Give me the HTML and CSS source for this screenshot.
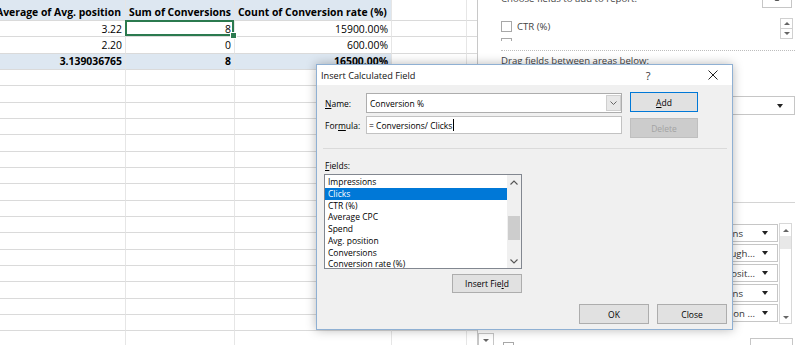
FILE: index.html
```html
<!DOCTYPE html>
<html>
<head>
<meta charset="utf-8">
<link rel="stylesheet" href="styles.css">
</head>
<body>
<div class="app">
  <div class="sheet">
    <div class="row head">
      <div class="c c1 num">Average of Avg. position</div>
      <div class="c c2">Sum of Conversions</div>
      <div class="c c3">Count of Conversion rate (%)</div>
      <div class="c c4"></div>
      <div class="c c5"></div>
    </div>
    <div class="row">
      <div class="c c1 num">3.22</div>
      <div class="c c2 num sel">8</div>
      <div class="c c3 num">15900.00%</div>
      <div class="c c4"></div>
      <div class="c c5"></div>
    </div>
    <div class="row">
      <div class="c c1 num">2.20</div>
      <div class="c c2 num">0</div>
      <div class="c c3 num">600.00%</div>
      <div class="c c4"></div>
      <div class="c c5"></div>
    </div>
    <div class="row total">
      <div class="c c1 num">3.139036765</div>
      <div class="c c2 num">8</div>
      <div class="c c3 num">16500.00%</div>
      <div class="c c4"></div>
      <div class="c c5"></div>
    </div>
    <div class="row"><div class="c c1"></div><div class="c c2"></div><div class="c c3"></div><div class="c c4"></div><div class="c c5"></div></div>
    <div class="row"><div class="c c1"></div><div class="c c2"></div><div class="c c3"></div><div class="c c4"></div><div class="c c5"></div></div>
    <div class="row"><div class="c c1"></div><div class="c c2"></div><div class="c c3"></div><div class="c c4"></div><div class="c c5"></div></div>
    <div class="row"><div class="c c1"></div><div class="c c2"></div><div class="c c3"></div><div class="c c4"></div><div class="c c5"></div></div>
    <div class="row"><div class="c c1"></div><div class="c c2"></div><div class="c c3"></div><div class="c c4"></div><div class="c c5"></div></div>
    <div class="row"><div class="c c1"></div><div class="c c2"></div><div class="c c3"></div><div class="c c4"></div><div class="c c5"></div></div>
    <div class="row"><div class="c c1"></div><div class="c c2"></div><div class="c c3"></div><div class="c c4"></div><div class="c c5"></div></div>
    <div class="row"><div class="c c1"></div><div class="c c2"></div><div class="c c3"></div><div class="c c4"></div><div class="c c5"></div></div>
    <div class="row"><div class="c c1"></div><div class="c c2"></div><div class="c c3"></div><div class="c c4"></div><div class="c c5"></div></div>
    <div class="row"><div class="c c1"></div><div class="c c2"></div><div class="c c3"></div><div class="c c4"></div><div class="c c5"></div></div>
    <div class="row"><div class="c c1"></div><div class="c c2"></div><div class="c c3"></div><div class="c c4"></div><div class="c c5"></div></div>
    <div class="row"><div class="c c1"></div><div class="c c2"></div><div class="c c3"></div><div class="c c4"></div><div class="c c5"></div></div>
    <div class="row"><div class="c c1"></div><div class="c c2"></div><div class="c c3"></div><div class="c c4"></div><div class="c c5"></div></div>
    <div class="row"><div class="c c1"></div><div class="c c2"></div><div class="c c3"></div><div class="c c4"></div><div class="c c5"></div></div>
    <div class="row"><div class="c c1"></div><div class="c c2"></div><div class="c c3"></div><div class="c c4"></div><div class="c c5"></div></div>
    <div class="row"><div class="c c1"></div><div class="c c2"></div><div class="c c3"></div><div class="c c4"></div><div class="c c5"></div></div>
    <div class="row"><div class="c c1"></div><div class="c c2"></div><div class="c c3"></div><div class="c c4"></div><div class="c c5"></div></div>
    <div class="row"><div class="c c1"></div><div class="c c2"></div><div class="c c3"></div><div class="c c4"></div><div class="c c5"></div></div>
  </div>

  <div class="panel">
    <div class="p-head">
      <span class="p-title">Choose fields to add to report:</span>
      <span class="gear"><svg width="8" height="4" viewBox="0 0 8 4"><path d="M1 0 H7 V1.5 L5.5 3 H2.5 L1 1.5 Z" fill="#555"/></svg></span>
    </div>
    <div class="flist">
      <div class="fitems">
        <div class="fitem"><span class="cb"></span><span>CTR (%)</span></div>
        <div class="fitem"><span class="cb"></span><span></span></div>
      </div>
      <div class="fscroll">
        <span class="sarr"><span class="tri-up"></span></span>
        <span class="sarr"><span class="tri-dn"></span></span>
      </div>
    </div>
    <div class="dotted"></div>
    <div class="p-drag">Drag fields between areas below:</div>
    <div class="areas">
      <div class="area-left"></div>
      <div class="area-right">
        <div class="coldrop"><span class="tri-dn dark"></span></div>
        <div class="vline"></div>
        <div class="vlist">
          <div class="vboxes">
            <div class="vbox short"><span class="vtxt">Sum of Conversions</span><span class="tri-dn dark"></span></div>
            <div class="vbox"><span class="vtxt">Sum of Click Through...</span><span class="tri-dn dark"></span></div>
            <div class="vbox"><span class="vtxt">Average of Avg. posit...</span><span class="tri-dn dark"></span></div>
            <div class="vbox short"><span class="vtxt">Sum of Conversions</span><span class="tri-dn dark"></span></div>
            <div class="vbox"><span class="vtxt">Count of Conversion ...</span><span class="tri-dn dark"></span></div>
          </div>
          <div class="vscroll">
            <span class="vs-arr"><span class="tri-up"></span></span>
            <span class="vs-thumb"></span>
            <span class="vs-track"></span>
            <span class="vs-arr"><span class="tri-dn"></span></span>
          </div>
        </div>
      </div>
    </div>
    <div class="p-foot">
      <span class="mini"><span class="tri-dn"></span></span>
      <span class="cb foot-cb"></span>
      <span class="upd"></span>
    </div>
  </div>
</div>

<div class="dialog">
  <div class="dlg-title">
    <span class="dlg-t">Insert Calculated Field</span>
    <span class="dlg-help">?</span>
    <span class="dlg-x"><svg width="10" height="10" viewBox="0 0 10 10"><path d="M0.5 0.5 L9.5 9.5 M9.5 0.5 L0.5 9.5" stroke="#222" stroke-width="1"/></svg></span>
  </div>
  <div class="dlg-body">
    <div class="top">
      <div class="fields-col">
        <div class="frow">
          <span class="lbl"><u>N</u>ame:</span>
          <div class="combo">
            <span class="ctext">Conversion %</span>
            <span class="combo-btn"><svg width="7" height="4" viewBox="0 0 7 4"><path d="M0.5 0.5 L3.5 3.5 L6.5 0.5" fill="none" stroke="#666" stroke-width="1"/></svg></span>
          </div>
        </div>
        <div class="frow f2">
          <span class="lbl">For<u>m</u>ula:</span>
          <div class="input"><span class="ctext">= Conversions/ Clicks</span><span class="caret"></span></div>
        </div>
      </div>
      <div class="btn-col">
        <button class="btn default"><u>A</u>dd</button>
        <button class="btn disabled">Delete</button>
      </div>
    </div>
    <div class="sep"></div>
    <div class="flabel"><u>F</u>ields:</div>
    <div class="listwrap">
      <div class="listbox">
        <div class="items">
          <div class="item">Impressions</div>
          <div class="item on">Clicks</div>
          <div class="item">CTR (%)</div>
          <div class="item">Average CPC</div>
          <div class="item">Spend</div>
          <div class="item">Avg. position</div>
          <div class="item">Conversions</div>
          <div class="item">Conversion rate (%)</div>
        </div>
        <div class="lscroll">
          <span class="larr"><svg width="8" height="5" viewBox="0 0 8 5"><path d="M0.5 4.5 L4 1 L7.5 4.5" fill="none" stroke="#555" stroke-width="1.1"/></svg></span>
          <span class="ltrack"><span class="lthumb"></span></span>
          <span class="larr"><svg width="8" height="5" viewBox="0 0 8 5"><path d="M0.5 0.5 L4 4 L7.5 0.5" fill="none" stroke="#555" stroke-width="1.1"/></svg></span>
        </div>
      </div>
      <button class="btn ins">Insert Fie<u>l</u>d</button>
    </div>
    <div class="foot">
      <button class="btn">OK</button>
      <button class="btn">Close</button>
    </div>
  </div>
</div>
</body>
</html>
```

FILE: styles.css
```css
* { box-sizing: border-box; }
html, body {
  margin: 0;
  width: 800px;
  height: 345px;
  overflow: hidden;
  background: #fff;
}
body {
  position: relative;
  font-family: "Open Sans", "Liberation Sans", sans-serif;
  color: #000;
}
.app {
  display: flex;
  height: 345px;
}

/* ---------- spreadsheet ---------- */
.sheet {
  width: 477px;
  flex: none;
  font-size: 10.4px;
  overflow: hidden;
}
.row {
  display: flex;
  height: 16.33px;
}
.row.head { height: 21px; }
.c {
  position: relative;
  display: flex;
  align-items: center;
  flex: none;
  height: 100%;
  padding: 0 3px;
  white-space: nowrap;
  overflow: hidden;
  border-bottom: 1px solid #dadada;
  border-right: 1px solid #e6e6e6;
}
.c1 { width: 126px; }
.c2 { width: 109px; }
.c3 { width: 157px; }
.c4 { width: 75px; }
.c5 { width: 10px; border-right: none; }
.num { justify-content: flex-end; }
.head .c { padding-top: 4px; }
.head .c1, .head .c2, .head .c3,
.total .c1, .total .c2, .total .c3 {
  background: #dde7f1;
  font-weight: 700;
}
.head .c1 { padding-right: 4px; }
.c.sel { overflow: visible; }
.sel::after {
  content: "";
  position: absolute;
  top: -1px;
  left: -1px;
  right: 0;
  bottom: 0;
  border: 2px solid #2b7a4f;
}
.sel::before {
  content: "";
  position: absolute;
  right: -3px;
  bottom: -3px;
  width: 5px;
  height: 5px;
  background: #2b7a4f;
  border: 1px solid #fff;
  z-index: 2;
}

/* ---------- pivot panel ---------- */
.panel {
  flex: 1;
  border-left: 1px solid #c8c8c8;
  padding: 0 5px 0 23px;
  display: flex;
  flex-direction: column;
  font-size: 9.6px;
  color: #444;
  min-width: 0;
}
.p-head {
  display: flex;
  height: 14px;
  margin-top: -8px;
  line-height: 14px;
  flex: none;
}
.p-title { flex: 1; }
.gear {
  align-self: flex-start;
  margin-top: 6px;
  width: 30px;
  height: 10px;
  margin-right: 3px;
  border: 1px solid #c6c6c6;
  border-top: none;
  display: flex;
  justify-content: center;
  align-items: flex-start;
  flex: none;
}
.flist {
  display: flex;
  height: 25px;
  margin-top: 10px;
  overflow: hidden;
  flex: none;
}
.fitems { flex: 1; padding-top: 5px; }
.fitem {
  display: flex;
  align-items: center;
  height: 17px;
  gap: 5px;
  margin-top: -3px;
}
.fitem:first-child { margin-top: 0; height: 11px; margin-bottom: 6px; }
.cb {
  width: 11px;
  height: 11px;
  border: 1px solid #a8a8a8;
  background: #fff;
  flex: none;
}
.fscroll {
  width: 13px;
  margin-top: 2px;
  margin-right: 2px;
  display: flex;
  flex-direction: column;
  flex: none;
}
.sarr {
  height: 11px;
  border: 1px solid #d0d0d0;
  display: flex;
  align-items: center;
  justify-content: center;
}
.sarr + .sarr { border-top: none; height: 10px; }
.tri-up {
  width: 0;
  height: 0;
  border-left: 3px solid transparent;
  border-right: 3px solid transparent;
  border-bottom: 3px solid #666;
}
.tri-dn {
  width: 0;
  height: 0;
  border-left: 3px solid transparent;
  border-right: 3px solid transparent;
  border-top: 3px solid #666;
  flex: none;
}
.tri-dn.dark { border-top: 4px solid #222; border-left-width: 3.5px; border-right-width: 3.5px; }
.dotted {
  margin-top: 9px;
  border-top: 1px dotted #bdbdbd;
  flex: none;
}
.p-drag {
  margin-top: 3px;
  line-height: 14px;
  height: 14px;
  flex: none;
}
.areas {
  display: flex;
  flex: none;
  height: 257px;
}
.area-left { flex: 1; }
.area-right {
  width: 95px;
  display: flex;
  flex-direction: column;
}
.coldrop {
  margin-top: 28px;
  height: 19px;
  border: 1px solid #c6c6c6;
  display: flex;
  align-items: center;
  justify-content: flex-end;
  padding-right: 11px;
}
.vline {
  margin-top: 87px;
  border-top: 1px solid #d4d4d4;
}
.vlist {
  margin-top: 20px;
  display: flex;
  height: 101px;
}
.vboxes {
  flex: 1;
  padding-top: 1px;
  min-width: 0;
}
.vbox {
  height: 18px;
  margin-bottom: 2px;
  border: 1px solid #c6c6c6;
  display: flex;
  align-items: center;
  padding-left: 30px;
  padding-right: 9px;
  color: #333;
}
.vtxt {
  flex: 1;
  min-width: 0;
  display: flex;
  justify-content: flex-end;
  overflow: hidden;
  white-space: nowrap;
  padding-right: 7px;
}
.vbox.short .vtxt { padding-right: 19px; }
.vscroll {
  width: 13px;
  margin-left: 1px;
  margin-right: 3px;
  border: 1px solid #d8d8d8;
  display: flex;
  flex-direction: column;
}
.vs-arr {
  height: 12px;
  display: flex;
  align-items: center;
  justify-content: center;
  flex: none;
}
.vs-thumb {
  height: 13px;
  background: #e8e8e8;
  flex: none;
}
.vs-track { flex: 1; }
.p-foot {
  display: flex;
  align-items: flex-start;
  margin-left: -23px;
  margin-top: 8px;
  flex: none;
}
.mini {
  width: 16px;
  height: 16px;
  border: 1px solid #c6c6c6;
  display: flex;
  justify-content: center;
  padding-top: 5px;
}
.foot-cb { margin-left: 9px; margin-top: 9px; }
.upd {
  margin-left: auto;
  margin-right: 2px;
  margin-top: 5px;
  width: 43px;
  height: 14px;
  border: 1px solid #c6c6c6;
}

/* ---------- dialog ---------- */
.dialog {
  position: absolute;
  left: 316px;
  top: 64px;
  width: 417px;
  height: 266px;
  border: 1px solid #8fb0d3;
  background: #f0f0f0;
  box-shadow: 0 0 10px rgba(0, 0, 0, 0.28);
  font-size: 8.5px;
  color: #000;
}
.dlg-title {
  height: 20px;
  background: #fff;
  display: flex;
  align-items: center;
  padding-left: 4px;
}
.dlg-t { font-size: 9.2px; color: #111; }
.dlg-help {
  margin-left: auto;
  width: 14px;
  text-align: center;
  font-size: 11px;
  color: #333;
}
.dlg-x {
  width: 14px;
  margin-left: 51px;
  margin-right: 12px;
  display: flex;
  justify-content: center;
}
.dlg-body {
  padding: 8px 5px 0 8px;
}
.top {
  display: flex;
  align-items: flex-start;
}
.fields-col { width: 297px; }
.frow {
  display: flex;
  align-items: center;
  height: 20px;
}
.frow.f2 { margin-top: 3px; height: 18px; }
.lbl { width: 41px; flex: none; }
.combo, .input {
  flex: 1;
  height: 100%;
  background: #fff;
  border: 1px solid #adadad;
  display: flex;
  align-items: center;
  padding-left: 3px;
}
.input { border-color: #c2c2c2; padding-left: 2px; }
.ctext { white-space: nowrap; }
.combo-btn {
  margin-left: auto;
  width: 15px;
  height: 16px;
  background: #e8e8e8;
  border: 1px solid #cfcfcf;
  display: flex;
  align-items: center;
  justify-content: center;
  margin-right: 0;
}
.caret {
  width: 1px;
  height: 12px;
  background: #000;
  margin-left: 1px;
}
.btn-col {
  margin-left: 8px;
  width: 68px;
  display: flex;
  flex-direction: column;
}
.btn {
  font-family: "Open Sans", "Liberation Sans", sans-serif;
  font-size: 8.5px;
  color: #000;
  background: #e1e1e1;
  border: 1px solid #adadad;
  border-radius: 0;
  padding: 0;
  height: 20px;
  display: flex;
  align-items: center;
  justify-content: center;
}
.btn.default { border-color: #0078d7; margin-top: -1px; }
.btn.disabled {
  margin-top: 6px;
  background: #cccccc;
  border-color: #bfbfbf;
  color: #a3a3a3;
}
.sep {
  margin-top: 10px;
  margin-left: -2px;
  border-top: 1px solid #dadada;
}
.flabel {
  margin-top: 11px;
  line-height: 12px;
  height: 12px;
}
.listwrap {
  margin-top: 2px;
  margin-left: -1px;
  width: 198px;
  display: flex;
  flex-direction: column;
}
.listbox {
  height: 95px;
  border: 1px solid #828790;
  background: #fff;
  display: flex;
  overflow: hidden;
}
.items {
  flex: 1;
  padding-top: 1px;
  overflow: hidden;
}
.item {
  height: 11.77px;
  line-height: 11.77px;
  padding-left: 3px;
  white-space: nowrap;
}
.item.on { background: #0078d7; color: #fff; }
.lscroll {
  width: 14px;
  background: #f0f0f0;
  display: flex;
  flex-direction: column;
  flex: none;
}
.larr {
  height: 14px;
  display: flex;
  align-items: center;
  justify-content: center;
  flex: none;
}
.ltrack { flex: 1; padding-top: 27px; }
.lthumb {
  display: block;
  height: 24px;
  margin: 0 1px;
  background: #cdcdcd;
}
.btn.ins {
  align-self: flex-end;
  margin-top: 5px;
  width: 70px;
  height: 19px;
}
.foot {
  display: flex;
  justify-content: flex-end;
  gap: 8px;
  margin-top: 11px;
}
.foot .btn { width: 70px; }
```
